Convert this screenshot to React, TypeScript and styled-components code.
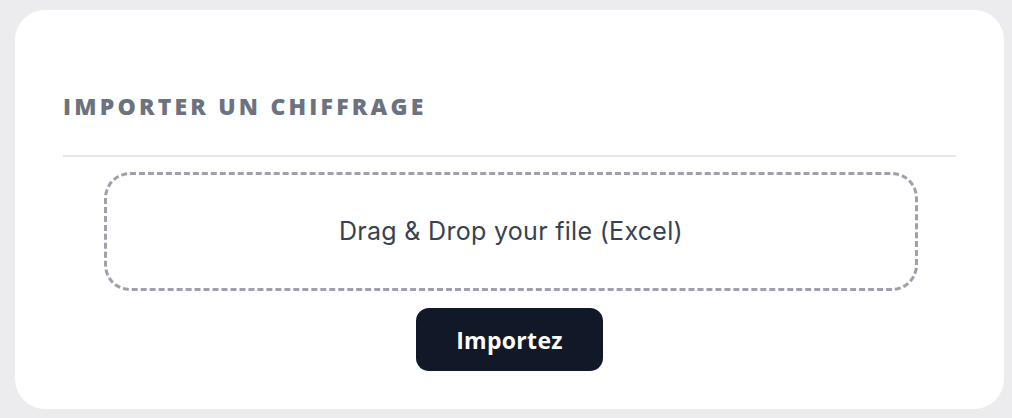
import React from "react";
import styled, { createGlobalStyle } from "styled-components";

const Global = createGlobalStyle`
  html, body { margin: 0; padding: 0; background: #ececee; }
  body { font-family: Inter, "Open Sans", sans-serif; }
`;

const Page = styled.div`
  padding: 10px 8px 9px 15px;
  box-sizing: border-box;
  height: 418px;
`;

const Card = styled.section`
  background: #ffffff;
  border-radius: 30px;
  height: 100%;
  box-sizing: border-box;
  padding: 82px 48px 38px 48px;
  display: flex;
  flex-direction: column;
`;

const Title = styled.h2`
  margin: 0;
  font-family: "Open Sans", Inter, sans-serif;
  font-weight: 800;
  font-size: 23px;
  line-height: 28px;
  letter-spacing: 3.2px;
  text-transform: uppercase;
  color: #6b7280;
`;

const Divider = styled.hr`
  border: 0;
  height: 2px;
  background: #e5e7eb;
  margin: 35px 0 15px 0;
`;

const DropZone = styled.div`
  margin: 0 38px 0 41px;
  height: 120px;
  box-sizing: border-box;
  border: 3px dashed #a09fab;
  border-radius: 26px;
  display: flex;
  align-items: center;
  justify-content: center;
  font-family: Inter, sans-serif;
  font-size: 25px;
  letter-spacing: 0.3px;
  color: #374151;
`;

const Actions = styled.div`
  display: flex;
  justify-content: center;
  margin-top: 17px;
`;

const Button = styled.button`
  width: 187px;
  height: 63px;
  border: 0;
  border-radius: 13px;
  background: #111827;
  color: #ffffff;
  font-family: "Open Sans", Inter, sans-serif;
  font-weight: 700;
  font-size: 23px;
  letter-spacing: 0.3px;
  cursor: pointer;
`;

export default function App() {
  return (
    <>
      <Global />
      <Page>
        <Card>
          <Title>Importer un chiffrage</Title>
          <Divider />
          <DropZone>Drag &amp; Drop your file (Excel)</DropZone>
          <Actions>
            <Button>Importez</Button>
          </Actions>
        </Card>
      </Page>
    </>
  );
}
